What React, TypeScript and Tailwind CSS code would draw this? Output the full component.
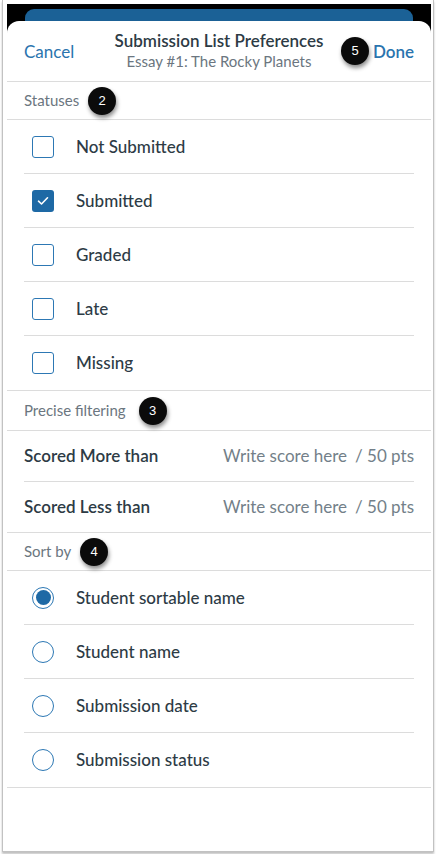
import React from "react";

const Badge = ({ n, className = "" }: { n: number; className?: string }) => (
  <div
    className={
      "flex h-[28px] w-[28px] items-center justify-center rounded-full bg-[#0b0b0b] text-[13px] text-white shadow-[1px_3px_4px_rgba(0,0,0,0.45)] " +
      className
    }
    style={{ fontFamily: "Arial, 'Liberation Sans', sans-serif" }}
  >
    {n}
  </div>
);

const SectionHeader = ({ label, badge, h, gap }: { label: string; badge: number; h: string; gap: string }) => (
  <div className={"flex items-center border-b border-[#dcdcdc] pl-[17px] " + h}>
    <span className="text-[15px] text-[#6b7680]">{label}</span>
    <Badge n={badge} className={gap} />
  </div>
);

const Checkbox = ({ checked }: { checked?: boolean }) =>
  checked ? (
    <div className="flex h-[22px] w-[22px] items-center justify-center rounded-[3px] bg-[#1e69a5]">
      <svg width="12" height="10" viewBox="0 0 12 10" fill="none">
        <path d="M1.5 5.2 L4.5 8 L10.5 1.8" stroke="white" strokeWidth="1.6" strokeLinecap="round" strokeLinejoin="round" />
      </svg>
    </div>
  ) : (
    <div className="h-[22px] w-[22px] rounded-[3px] border-[1.5px] border-[#2d78b4] bg-white" />
  );

const Radio = ({ checked }: { checked?: boolean }) => (
  <div className="flex h-[22px] w-[22px] items-center justify-center rounded-full border-[1.5px] border-[#2d78b4] bg-white">
    {checked && <div className="h-[15px] w-[15px] rounded-full bg-[#1e69a5]" />}
  </div>
);

const statuses = [
  { label: "Not Submitted", checked: false },
  { label: "Submitted", checked: true },
  { label: "Graded", checked: false },
  { label: "Late", checked: false },
  { label: "Missing", checked: false },
];

const sorts = [
  { label: "Student sortable name", checked: true },
  { label: "Student name", checked: false },
  { label: "Submission date", checked: false },
  { label: "Submission status", checked: false },
];

export default function App() {
  return (
    <div className="min-h-[854px] bg-white" style={{ fontFamily: "Lato, 'Open Sans', sans-serif" }}>
      <div className="ml-[2px] flex h-[852px] w-[432px] flex-col border-x border-b border-[#c2c2c2] pl-[4px] pr-[2px] pt-[4px] shadow-[0_2px_2px_rgba(0,0,0,0.25)]">
        <div className="flex flex-1 flex-col bg-black">
          <div className="mx-[18px] mt-[5px] h-[20px] rounded-t-[9px] bg-[#1b6196]" />
          <div className="relative -mt-[8px] flex flex-1 flex-col rounded-t-[12px] bg-white">
            {/* Header */}
            <div className="relative flex h-[61px] items-center justify-between border-b border-[#dcdcdc] px-[17px]">
              <span className="pt-[2px] text-[17px] text-[#2a74ae]">Cancel</span>
              <div className="absolute left-0 right-0 top-[9px] flex flex-col items-center">
                <span className="text-[17px] font-semibold leading-[21px] text-[#2d3b45]">Submission List Preferences</span>
                <span className="text-[15px] leading-[20px] text-[#6b7680]">Essay #1: The Rocky Planets</span>
              </div>
              <span className="pt-[2px] text-[17px] font-semibold text-[#2a74ae]">Done</span>
              <Badge n={5} className="absolute left-[334px] top-[16px]" />
            </div>

            {/* Statuses */}
            <SectionHeader label="Statuses" badge={2} h="h-[38px]" gap="ml-[9px]" />
            <div className="border-b border-[#dcdcdc]">
              {statuses.map((s, i) => (
                <div
                  key={s.label}
                  className={
                    "mx-[17px] flex h-[54px] items-center gap-[22px] pl-[8px] " +
                    (i < statuses.length - 1 ? "border-b border-[#dcdcdc]" : "h-[53px]")
                  }
                >
                  <Checkbox checked={s.checked} />
                  <span className="text-[17px] font-medium text-[#2d3b45]">{s.label}</span>
                </div>
              ))}
            </div>

            {/* Precise filtering */}
            <SectionHeader label="Precise filtering" badge={3} h="h-[40px]" gap="ml-[13px]" />
            <div className="border-b border-[#dcdcdc]">
              {["Scored More than", "Scored Less than"].map((l, i) => (
                <div
                  key={l}
                  className={
                    "mx-[17px] flex items-center justify-between " +
                    (i === 0 ? "h-[51px] border-b border-[#dcdcdc]" : "h-[50px]")
                  }
                >
                  <span className="text-[17px] font-semibold text-[#2d3b45]">{l}</span>
                  <span className="text-[17px] text-[#737f89]">
                    Write score here<span className="ml-[8px]">/ 50 pts</span>
                  </span>
                </div>
              ))}
            </div>

            {/* Sort by */}
            <SectionHeader label="Sort by" badge={4} h="h-[38px]" gap="ml-[9px]" />
            <div className="border-b border-[#dcdcdc]">
              {sorts.map((s, i) => (
                <div
                  key={s.label}
                  className={
                    "mx-[17px] flex h-[54px] items-center gap-[22px] pl-[8px] " +
                    (i < sorts.length - 1 ? "border-b border-[#dcdcdc]" : "h-[53px]")
                  }
                >
                  <Radio checked={s.checked} />
                  <span className="text-[17px] font-medium text-[#2d3b45]">{s.label}</span>
                </div>
              ))}
            </div>
          </div>
        </div>
      </div>
    </div>
  );
}
